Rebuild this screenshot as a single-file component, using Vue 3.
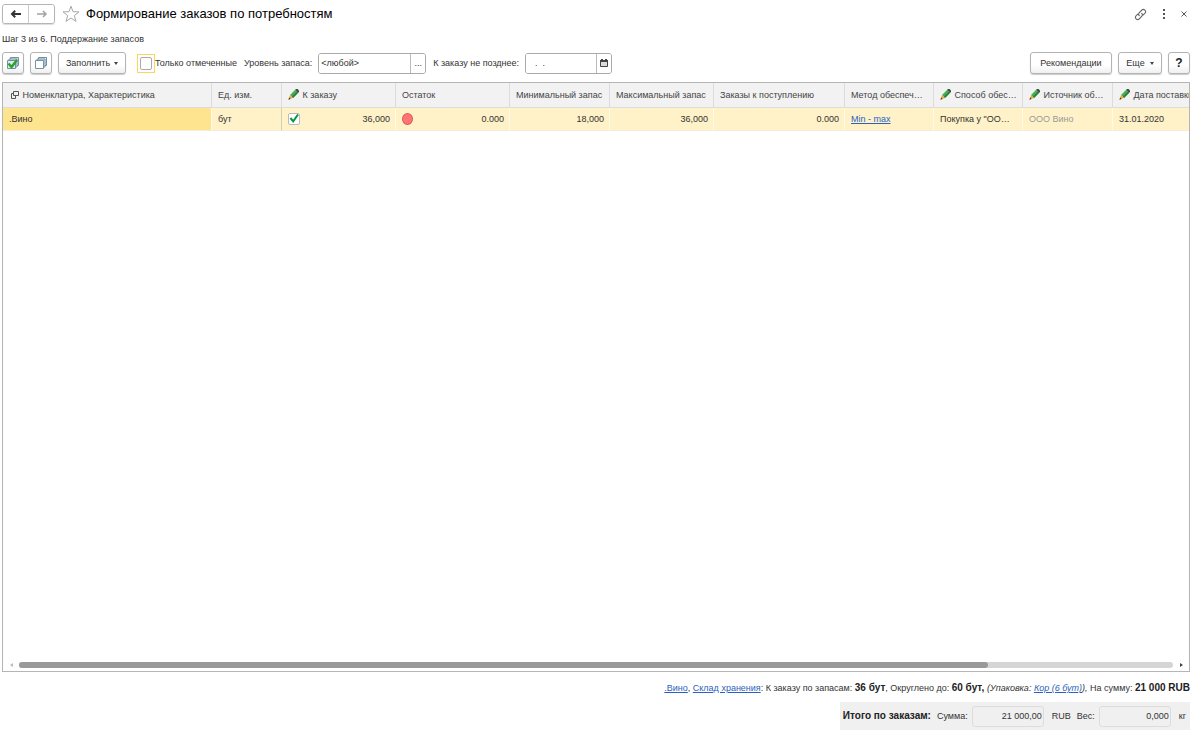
<script setup>
import { ref } from 'vue'

const onlyMarked = ref(false)
const marked = ref(true)
const level = ref('<любой>')
const dueDate = ref('  .  .')

const columns = [
  { key: 'item', title: 'Номенклатура, Характеристика', icon: 'tree' },
  { key: 'unit', title: 'Ед. изм.' },
  { key: 'order', title: 'К заказу', icon: 'pencil' },
  { key: 'rest', title: 'Остаток' },
  { key: 'min', title: 'Минимальный запас' },
  { key: 'max', title: 'Максимальный запас' },
  { key: 'incoming', title: 'Заказы к поступлению' },
  { key: 'method', title: 'Метод обеспеч…' },
  { key: 'way', title: 'Способ обес…', icon: 'pencil' },
  { key: 'source', title: 'Источник об…', icon: 'pencil' },
  { key: 'date', title: 'Дата поставки', icon: 'pencil' },
]
</script>

<template>
  <main class="page">
    <header class="titlebar">
      <div class="nav">
        <button type="button" aria-label="Назад">
          <svg width="12" height="10" viewBox="0 0 12 10"><path d="M11 5H3M5.200 1.800L2 5l3.200 3.200" fill="none" stroke="#333" stroke-width="2" /></svg>
        </button>
        <button type="button" aria-label="Вперед">
          <svg width="12" height="10" viewBox="0 0 12 10"><path d="M1 5h8.500M7 2l3 3-3 3" fill="none" stroke="#a3a3a3" stroke-width="1.500" /></svg>
        </button>
      </div>
      <button type="button" class="plain star" aria-label="В избранное">
        <svg width="18" height="18" viewBox="0 0 18 18"><path d="M9 1.200l2 5.500 6 .2-4.700 3.700 1.700 5.800L9 13l-5 3.400 1.700-5.800L1 6.900l6-.2z" fill="#fff" stroke="#a8a8a8" /></svg>
      </button>
      <h1>Формирование заказов по потребностям</h1>
      <div class="window-tools">
        <button type="button" class="plain" aria-label="Ссылка">
          <svg width="13" height="13" viewBox="0 0 13 13" fill="none" stroke="#666" stroke-width="1.100" stroke-linecap="round"><path d="M5.300 7.700a2.200 2.200 0 0 1 0-3.100l2.600-2.600a2.200 2.200 0 0 1 3.100 3.100L9.300 6.800M7.700 5.300a2.200 2.200 0 0 1 0 3.100L5.100 11A2.200 2.200 0 0 1 2 7.900l1.700-1.700" /></svg>
        </button>
        <button type="button" class="plain" aria-label="Меню">
          <svg width="4" height="10" viewBox="0 0 4 10" fill="#555"><path d="M1 0h2v2H1zM1 4h2v2H1zM1 8h2v2H1z" /></svg>
        </button>
        <button type="button" class="plain" aria-label="Закрыть">
          <svg width="6" height="6" viewBox="0 0 6 6"><path d="M.5.5l5 5M5.500.5l-5 5" stroke="#555" fill="none" /></svg>
        </button>
      </div>
    </header>

    <p class="step">Шаг 3 из 6. Поддержание запасов</p>

    <div class="toolbar">
      <button type="button" class="btn square" aria-label="Отметить все">
        <svg width="14" height="14" viewBox="0 0 14 14">
          <g fill="#dce8ef" stroke="#7590a5"><path d="M4.500 1.500h8v8h-8z" /><path d="M3 3h8v8H3z" /><path d="M1.500 4.500h8v8h-8z" /></g>
          <path d="M2.500 7.500l3 3.500L11 4" fill="none" stroke="#25a525" stroke-width="2.400" />
        </svg>
      </button>
      <button type="button" class="btn square" aria-label="Снять отметки">
        <svg width="14" height="14" viewBox="0 0 14 14">
          <g fill="#dce8ef" stroke="#7590a5"><path d="M4.500 1.500h8v8h-8z" /><path d="M3 3h8v8H3z" /><path d="M1.500 4.500h8v8h-8z" fill="#fff" /></g>
        </svg>
      </button>
      <button type="button" class="btn fill">Заполнить <i class="caret"></i></button>
      <label class="only"><span class="focus"><input v-model="onlyMarked" type="checkbox" class="check" /></span>Только отмеченные</label>
      <label for="level" class="field-label">Уровень запаса:</label>
      <div class="field level">
        <input id="level" v-model="level" type="text" />
        <button type="button" aria-label="Выбрать">...</button>
      </div>
      <label for="due" class="field-label">К заказу не позднее:</label>
      <div class="field due">
        <input id="due" v-model="dueDate" type="text" />
        <button type="button" aria-label="Календарь">
          <svg width="8" height="8" viewBox="0 0 8 8"><path d="M.5 1.500h7v6h-7z" fill="#ddd" stroke="#444" /><path d="M0 1h8v2H0zM1 0h2v1H1zM5 0h2v1H5z" fill="#444" /></svg>
        </button>
      </div>
      <div class="right">
        <button type="button" class="btn rec">Рекомендации</button>
        <button type="button" class="btn more">Еще <i class="caret"></i></button>
        <button type="button" class="btn help">?</button>
      </div>
    </div>

    <section class="grid">
      <div class="viewport">
        <table>
          <colgroup><col v-for="c in columns" :key="c.key" :class="'c-' + c.key" /></colgroup>
          <thead>
            <tr>
              <th v-for="c in columns" :key="c.key" scope="col">
                <svg v-if="c.icon === 'tree'" class="tree" width="8" height="8" viewBox="0 0 8 8" fill="none" stroke="#555"><path d="M2.500.5h5v4h-5z" /><path d="M2.500 2.500h-2v5h4v-3" /></svg>
                <svg v-if="c.icon === 'pencil'" class="pencil" width="11" height="11" viewBox="0 0 11 11"><path d="M7.200.8L10.200 3.800 5 9 2 6z" fill="#45b051" /><path d="M8.900 2.500l1.300 1.300L5 9 3.700 7.700z" fill="#2d8140" /><path d="M8 0h1.500L11 1.500V3l-.8.8L7.200.8z" fill="#35494a" /><path d="M2 6l3 3L.5 10.500z" fill="#efa83e" /><path d="M1.200 8.500l1.400 1.400L.4 10.700z" fill="#333" /></svg>
                {{ c.title }}
              </th>
            </tr>
          </thead>
          <tbody>
            <tr>
              <td class="current">.Вино</td>
              <td class="fixed-edge">бут</td>
              <td>
                <div class="split">
                  <span class="tick">
                    <input v-model="marked" type="checkbox" class="check small" aria-label="К заказу" />
                    <svg v-if="marked" width="12" height="12" viewBox="0 0 12 12"><path d="M2.500 5l2.700 3.300L10 1.500" fill="none" stroke="#079447" stroke-width="2" /></svg>
                  </span>
                  36,000
                </div>
              </td>
              <td><div class="split"><span class="dot"></span>0.000</div></td>
              <td class="num">18,000</td>
              <td class="num">36,000</td>
              <td class="num">0.000</td>
              <td><a href="#">Min - max</a></td>
              <td>Покупка у "ОО…</td>
              <td class="muted">ООО Вино</td>
              <td>31.01.2020</td>
            </tr>
          </tbody>
        </table>
      </div>
      <div class="scroll">
        <i class="arrow left"></i>
        <div class="track"><div class="thumb"></div></div>
        <i class="arrow next"></i>
      </div>
    </section>

    <p class="summary"><a href="#">.Вино</a>, <a href="#">Склад хранения</a>: К заказу по запасам: <b>36 бут</b>, Округлено до: <b>60 бут, </b><em>(Упаковка: <a href="#">Кор (6 бут)</a>),</em> На сумму: <b>21 000 RUB</b></p>

    <footer class="totals">
      <b>Итого по заказам:</b>
      <label for="sum">Сумма:</label>
      <input id="sum" type="text" value="21 000,00" readonly />
      <span class="unit">RUB</span>
      <label for="weight">Вес:</label>
      <input id="weight" type="text" value="0,000" readonly />
      <span class="unit">кг</span>
    </footer>
  </main>
</template>

<style>
body { background: #fff; }
</style>

<style scoped>
* { box-sizing: border-box; }
.page {
  display: flex;
  flex-direction: column;
  min-height: 100vh;
  padding: 4px 7px 2px 2px;
  font: 9px/14px "Liberation Sans", Arial, sans-serif;
  color: #333;
}
button, input { font: inherit; color: inherit; margin: 0; }
button { display: flex; align-items: center; justify-content: center; padding: 0; }
svg { display: block; flex: none; }
a { color: #2b5fc0; }
p, h1 { margin: 0; }
.titlebar { display: flex; align-items: center; height: 20px; }
.nav { display: flex; width: 53px; height: 20px; border: 1px solid #b5b5b5; border-radius: 3px; box-shadow: 0 1px 1px #ddd; }
.nav button { flex: 1; border: 0; background: #fff; border-radius: 3px; }
.nav button + button { border-left: 1px solid #ccc; border-radius: 0 3px 3px 0; }
.plain { border: 0; background: none; }
.star { margin: 0 6px 0 7px; }
h1 { font-size: 13px; line-height: 20px; font-weight: 400; color: #000; white-space: nowrap; }
.window-tools { display: flex; align-items: center; margin-left: auto; gap: 15px; padding-right: 3px; }
.step { margin-top: 8px; }
.toolbar { display: flex; align-items: center; margin-top: 6px; height: 22px; white-space: nowrap; }
.btn { height: 22px; border: 1px solid #b3b3b3; border-radius: 3px; background: linear-gradient(#fff 60%, #f0f0f0); box-shadow: 0 1px 1px #ccc; }
.square { width: 22px; margin-right: 6px; }
.fill { width: 68px; gap: 4px; }
.caret { border: 2px solid transparent; border-top: 3px solid #444; border-bottom: 0; }
.only { display: flex; align-items: center; margin-left: 11px; }
.focus { display: flex; padding: 2px; border: 1px solid #f9d75e; }
.check { appearance: none; width: 12px; height: 13px; border: 1px solid #aaa; border-radius: 2px; background: #fff; }
.field-label { margin: 0 6px 0 7px; }
.field { display: flex; height: 21px; border: 1px solid #aaa; border-radius: 3px; overflow: hidden; }
.field input { flex: 1; min-width: 0; border: 0; padding: 0 2px; background: #fff; outline: 0; }
.field button { width: 15px; border: 0; border-left: 1px solid #bbb; background: #fff; }
.level { width: 108px; }
.due { width: 87px; }
.due input { padding-left: 4px; }
.right { display: flex; margin-left: auto; gap: 6px; }
.rec { width: 82px; }
.more { width: 44px; gap: 5px; }
.help { width: 22px; font-weight: 700; font-size: 12px; color: #222; }
.grid { flex: 1; display: flex; flex-direction: column; margin-top: 8px; border: 1px solid #b5b5b5; }
.viewport { flex: 1; overflow: hidden; }
table { width: 100%; table-layout: fixed; border-collapse: separate; border-spacing: 0; }
.c-unit { width: 70px; }
.c-order { width: 114px; }
.c-rest { width: 114px; }
.c-min { width: 100px; }
.c-max { width: 104px; }
.c-incoming { width: 131px; }
.c-method { width: 89px; }
.c-way { width: 89px; }
.c-source { width: 90px; }
.c-date { width: 76px; }
th, td { padding: 0 0 0 6px; text-align: left; white-space: nowrap; overflow: hidden; font-weight: 400; }
th { height: 25px; background: #f2f2f2; border-right: 1px solid #dcdcdc; border-bottom: 1px solid #dcdcdc; color: #444; }
td { height: 23px; background: #fff2c8; border-right: 1px solid #fff9e6; border-bottom: 1px solid #f3ecd8; }
th:last-child, td:last-child { border-right: 0; }
th:first-child { padding-left: 8px; }
.current { background: #ffe48f; }
.fixed-edge { border-right-color: #d3cdb9; }
.tree, .pencil { display: inline-block; vertical-align: -1px; margin-right: 1px; }
.pencil { vertical-align: -2px; }
.num { text-align: right; padding-right: 5px; }
.muted { color: #999; }
.split { display: flex; align-items: center; justify-content: space-between; padding-right: 5px; }
.tick { position: relative; display: flex; }
.tick svg { position: absolute; left: 0; top: 0; pointer-events: none; }
.small { height: 12px; border-color: #bbb; }
.dot { width: 11px; height: 12px; border: 1px solid #dc5c5a; border-radius: 50%; background: #ff7474; }
.scroll { display: flex; align-items: center; height: 12px; padding: 0 6px 0 7px; }
.track { flex: 1; height: 6px; margin: 0 7px 0 6px; border-radius: 3px; background: #d5d5d5; }
.thumb { width: 84%; height: 6px; border-radius: 3px; background: #999; }
.arrow { border: 2px solid transparent; }
.left { border-left: 0; border-right: 3px solid #bbb; }
.next { border-right: 0; border-left: 3px solid #444; }
.summary { margin-top: 9px; text-align: right; white-space: nowrap; }
.summary b, .totals b { font-size: 10px; color: #222; }
.totals { display: flex; align-items: center; align-self: flex-end; height: 28px; margin-top: 7px; padding: 0 4px 0 3px; background: #f0f0f0; white-space: nowrap; }
.totals label { margin: 0 4px 0 6px; }
.totals input { width: 72px; height: 21px; padding: 0 1px; text-align: right; border: 1px solid #ddd; border-radius: 3px; background: #f0f0f0; }
.unit { margin-left: 8px; }
</style>
